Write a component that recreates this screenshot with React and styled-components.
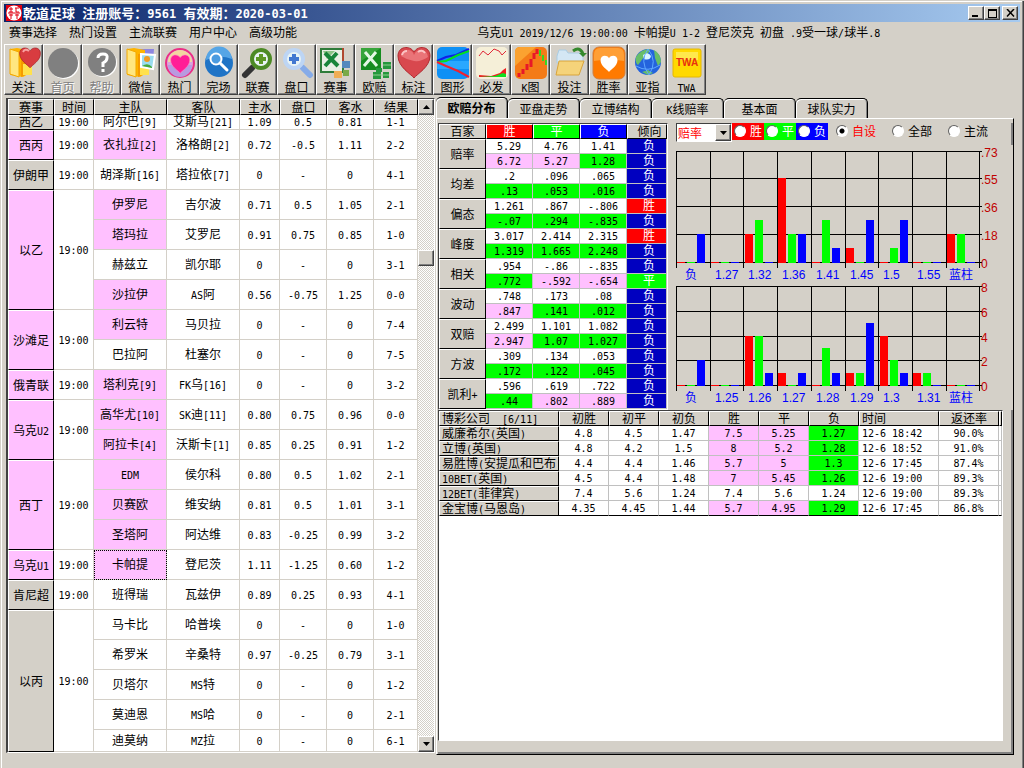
import { useState } from "react";
import styled, { createGlobalStyle, css } from "styled-components";

const face = "#d4d0c8";
const pink = "#ffc0ff";

const GlobalStyle = createGlobalStyle`
    * { box-sizing: border-box; }
    body {
        margin: 0;
        background: ${face};
    }
    body, button, select, table {
        font-family: "Noto Sans CJK SC", "Liberation Sans", sans-serif;
        font-size: 12px;
        line-height: 14px;
        color: #000;
    }
    button { padding: 0; cursor: default; }
`;

const raised = css`
    background: ${face};
    border: 1px solid;
    border-color: #fff #404040 #404040 #fff;
    box-shadow: inset -1px -1px #808080;
`;

const Latin = styled.span`
    font-family: "DejaVu Sans Mono", monospace;
    font-size: ${(p) => p.$size || 10}px;
    line-height: 0;
    white-space: pre;
`;

// half-width runs are set in the mono face, the rest in the CJK face
const Text = ({ children, size }) =>
    String(children)
        .split(/([\x20-\x7e]+)/)
        .filter(Boolean)
        .map((s, i) => (/^[\x20-\x7e]/.test(s) ? <Latin key={i} $size={size}>{s}</Latin> : s));

const Window = styled.div`
    min-height: 100vh;
    display: flex;
    flex-direction: column;
    padding: 4px 4px 13px;
    background: ${face};
    box-shadow: inset 0 1px ${face}, inset 1px 0 ${face}, inset -1px 0 #404040, inset -2px 0 #808080, inset 2px 2px #fff;
`;

const TitleBar = styled.header`
    height: 18px;
    display: flex;
    align-items: center;
    padding: 0 2px;
    background: linear-gradient(to right, #0a246a, #a6caf0);
`;

const Title = styled.h1`
    flex: 1;
    margin: 0 0 0 1px;
    color: #fff;
    font-size: 13px;
    line-height: 16px;
    font-weight: bold;
`;

const WinButton = styled.button`
    ${raised}
    width: 16px;
    height: 14px;
    display: grid;
    place-items: center;
    margin-left: ${(p) => (p.$apart ? 2 : 0)}px;
`;

const MenuBar = styled.div`
    height: 20px;
    display: flex;
    align-items: center;
`;

const Menu = styled.nav`
    flex: 0 0 46%;
    display: flex;
    gap: 12px;
    padding-left: 5px;
`;

const MenuItem = styled.button`
    border: 0;
    background: none;
`;

const MatchInfo = styled.div`
    flex: 1;
    padding-left: 6px;
    white-space: nowrap;
`;

const Toolbar = styled.div`
    display: flex;
    margin-top: 2px;
`;

const Tool = styled.button`
    ${raised}
    width: 39px;
    height: 51px;
    display: flex;
    flex-direction: column;
    align-items: center;
    justify-content: flex-start;
    padding-top: 1px;
    svg { display: block; }
    &:disabled {
        color: #808080;
        text-shadow: 1px 1px #fff;
    }
`;

const Main = styled.main`
    flex: 1;
    display: grid;
    grid-template-columns: 429fr 578fr;
    gap: 1px;
    padding: 2px 6px 0 2px;
`;

const MatchPane = styled.section`
    align-self: start;
    margin-top: 1px;
    display: flex;
    border: 2px solid;
    border-width: 1px 1px 1px 2px;
    border-color: #404040 #fff #fff #404040;
    background: #fff;
`;

const Table = styled.table`
    width: 100%;
    table-layout: fixed;
    border-collapse: separate;
    border-spacing: 0;
    tbody tr:last-child > td {
        border-bottom-color: ${(p) => (p.$closed ? "#000" : "")};
    }
`;

const HeadCell = styled.th`
    height: ${(p) => p.$height || 15}px;
    padding: 0 0 2px ${(p) => (p.$align ? 2 : p.$shift ? 5 : 0)}px;
    font-weight: normal;
    text-align: ${(p) => p.$align || "center"};
    line-height: 11px;
    white-space: nowrap;
    color: ${(p) => p.$color || "#000"};
    background: ${(p) => p.$bg || face};
    border: 1px solid;
    border-color: #fff #000 #000 #fff;
`;

const Cell = styled.td`
    height: ${(p) => p.$height || 15}px;
    padding: 0 0 2px ${(p) => (p.$align ? 3 : p.$shift ? 5 : 0)}px;
    text-align: ${(p) => p.$align || "center"};
    line-height: 12px;
    white-space: nowrap;
    color: ${(p) => p.$color || "#000"};
    background: ${(p) => p.$bg || "#fff"};
    border: 1px solid ${(p) => p.$line || face};
    border-width: 0 1px 1px 0;
    outline: ${(p) => (p.$focus ? "1px dotted #000" : "none")};
    outline-offset: -1px;
`;

const ScrollBar = styled.div`
    flex: 0 0 16px;
    display: flex;
    flex-direction: column;
    background: repeating-conic-gradient(${face} 0 25%, #fff 0 50%) 0 0 / 2px 2px;
`;

const ScrollButton = styled.button`
    ${raised}
    height: 16px;
    display: grid;
    place-items: center;
`;

const Thumb = styled.div`
    ${raised}
    height: 16px;
`;

const Spacer = styled.div`
    flex: ${(p) => p.$grow};
`;

const Analysis = styled.section`
    min-width: 0;
    display: flex;
    flex-direction: column;
`;

const Tabs = styled.div`
    display: flex;
    align-items: flex-end;
    height: 21px;
`;

const Tab = styled.button`
    width: 72px;
    height: ${(p) => (p.$active ? 21 : 20)}px;
    font-weight: ${(p) => (p.$active ? "bold" : "normal")};
    background: ${face};
    border: 1px solid #000;
    border-width: 1px 1px 0 0;
    border-radius: 5px 5px 0 0;
    box-shadow: inset 1px 1px #fff, inset -1px 0 #808080;
`;

const TabBody = styled.div`
    flex: 1;
    display: flex;
    flex-direction: column;
    padding: 4px 0 0 1px;
    border: 1px solid;
    border-color: #fff #000 #000 #fff;
`;

const Upper = styled.div`
    display: flex;
`;

const StatPane = styled.div`
    flex: 0 0 40%;
    border: 1px solid;
    border-color: #404040 #fff #fff #404040;
`;

const ChartPane = styled.div`
    flex: 1;
    min-width: 0;
    padding-left: 8px;
    svg { display: block; }
`;

const Controls = styled.form`
    height: 22px;
    display: flex;
    align-items: flex-start;
    border-right: 2px solid #808080;
`;

const Combo = styled.div`
    position: relative;
    width: 56px;
    height: 19px;
    border: 1px solid;
    border-color: #404040 #fff #fff #404040;
    background: #fff;
    select {
        width: 100%;
        height: 17px;
        padding: 0 0 0 1px;
        border: 0;
        appearance: none;
        background: #fff;
        color: #f00;
    }
`;

const ComboArrow = styled.span`
    ${raised}
    position: absolute;
    top: 0;
    right: 0;
    width: 16px;
    height: 17px;
    display: grid;
    place-items: center;
    pointer-events: none;
`;

const RadioLabel = styled.label`
    display: flex;
    align-items: center;
    gap: 4px;
    height: 17px;
    padding: 0 2px 2px;
    margin-left: ${(p) => (p.$bg ? 0 : 6)}px;
    min-width: ${(p) => (p.$bg ? 32 : 50)}px;
    white-space: nowrap;
    color: ${(p) => p.$color || "#000"};
    background: ${(p) => p.$bg || "none"};
    input {
        appearance: none;
        flex: none;
        width: 12px;
        height: 12px;
        margin: 0;
        border: 1px solid;
        border-color: #606060 #fff #fff #606060;
        border-radius: 50%;
        background: #fff;
    }
    input:checked {
        background: radial-gradient(circle, #000 2px, #fff 3px);
    }
`;

const Lower = styled.div`
    flex: 1;
    padding: 0 8px 11px 0;
    border-right: 2px solid #808080;
    border-bottom: 2px solid #808080;
    display: flex;
`;

const CompanyPane = styled.div`
    flex: 1;
    background: #fff;
    border: 1px solid;
    border-color: #404040 #fff #fff #404040;
`;

const Icon = ({ children }) => <svg width="34" height="34" viewBox="0 0 34 34" aria-hidden="true">{children}</svg>;

const Arrow = ({ up }) => (
    <svg width="7" height="4" viewBox="0 0 7 4" aria-hidden="true">
        <path d={up ? "M0 4h7L3.500 0z" : "M0 0h7L3.500 4z"} />
    </svg>
);

const HEART = "M17 32C14 28 1 21 1 10C1 0 13 -1 17 6C21 -1 33 0 33 10C33 21 20 28 17 32Z";

const Folder = () => (
    <>
        <path d="M3 3l7-1 11 2v24l-5 3-13-2z" fill="#ffb400" />
        <path d="M3 3l9 3v25l-9-3z" fill="#ffe680" stroke="#f3a800" />
        <path d="M14 8h6v20l-6 3z" fill="#f59a00" />
        <path d="M16 18h9v11h-9z" fill="#ffe14d" />
    </>
);

const Lens = ({ ring, handle, plus, flip }) => (
    <g transform={flip ? "matrix(-1 0 0 1 34 0)" : undefined}>
        <path d="M11 22l-7 7" stroke={handle} strokeWidth="6" strokeLinecap="round" />
        <circle cx="20" cy="13" r="9" fill="#e8f3f4" stroke={ring} strokeWidth="4" />
        <path d="M20 8v10M15 13h10" stroke={plus} strokeWidth="4" />
    </g>
);

const tools = [
    ["关注", <><Folder /><path transform="translate(12 1) scale(.65)" d={HEART} fill="#d83c40" stroke="#a01820" /><path d="M16 6q2-4 6-1" stroke="#f9a0a0" strokeWidth="2" fill="none" /></>],
    ["首页", <><circle cx="18" cy="18" r="15" fill="#fff" /><circle cx="17" cy="17" r="15" fill="#808080" /></>, true],
    ["帮助", <><circle cx="18" cy="17" r="14" fill="#fff" /><circle cx="17" cy="16" r="14" fill="#808080" /><path d="M13 12q0-4 5-4t4 4q0 3-4 5v4M18 23v3" fill="none" stroke="#fff" strokeWidth="3" /></>, true],
    ["微信", <><path d="M12 3h18l-1 12H12z" fill="#8d86e0" /><Folder /><path d="M17 8l14 1-2 14-12-2z" fill="#9adcf0" stroke="#fff" strokeWidth="2" /><circle cx="23" cy="13" r="3" fill="#f09a20" /><path d="M18 20q6-4 10 1v1l-10-2z" fill="#48a838" /></>],
    ["热门", <><circle cx="17" cy="17" r="14" fill="#d8a4dc" stroke="#ea2f86" strokeWidth="2" /><path d="M5 16a12 12 0 0 1 24 0z" fill="#f2d6a0" /><path d="M5 19a12 12 0 0 0 24 0z" fill="#b89ae0" /><path transform="translate(7 8) scale(.6)" d={HEART} fill="#ff1e96" stroke="#ff8cc8" /></>],
    ["完场", <><circle cx="17" cy="17" r="14" fill="#1f74c6" /><path d="M4 14a13 13 0 0 1 26-1q-13-5-26 1z" fill="#55a5e6" /><circle cx="14" cy="13" r="5.500" fill="#4b9be0" stroke="#fff" strokeWidth="2" /><path d="M18 17l7 7" stroke="#fff" strokeWidth="3" strokeLinecap="round" /></>],
    ["联赛", <Lens ring="#4c8a24" handle="#333" plus="#5d9826" />],
    ["盘口", <Lens ring="#bdd5f4" handle="#86abe8" plus="#4278d0" flip />],
    ["赛事", <><path d="M2 3h22v23H2z" fill="#e9efe5" stroke="#2f7c3a" strokeWidth="2" /><path d="M24 2v14" stroke="#b04830" strokeWidth="2" /><path d="M4 5h12l-8 8z" fill="#8cc487" /><path d="M6 7l13 13M18 7L6 20" stroke="#18853a" strokeWidth="4" /><path d="M23 15h8v7h-8z" fill="#5488bd" /><path d="M15 25h8v7h-8z" fill="#f0ad55" /><path d="M24 24h6v6h-6z" fill="#79a947" /></>],
    ["欧赔", <><path d="M3 2h20v22H3z" fill="#168c1f" /><path d="M3 2h20L3 15z" fill="#37a53b" /><path d="M7 6l12 14M18 6L6 20" stroke="#e3f7e3" strokeWidth="3" /><path d="M25 16h8v7h-8zM15 26h8v7h-8zM25 26h6v6h-6zM18 22h6v4h-6z" fill="#26983c" /><path d="M25 19h8M15 29h16" stroke="#8ed08c" /></>],
    ["标注", <><path d={HEART} fill="#d8484e" stroke="#b12c32" /><path d="M4 10q1-7 8-6 4 1 5 5 2-5 7-5 6 0 7 7-7 5-14 4T4 10z" fill="#ea7478" /><path d="M5 9q1-4 5-4M21 6q4-3 7 1" stroke="#fbc4c4" strokeWidth="2" fill="none" /></>],
    ["图形", <><rect x="1" y="1" width="32" height="32" rx="5" fill="#0e90f5" /><path d="M1 15h32v8H1z" fill="#2aa8ff" /><path d="M1 15l9-4 10-2 13-6" fill="none" stroke="#1020e8" strokeWidth="2" /><path d="M1 16l9-1 12-6 11-4" fill="none" stroke="#00e020" strokeWidth="2" /><path d="M1 16l9 4 12 5 11 6" fill="none" stroke="#f02030" strokeWidth="2" /></>],
    ["必发", <><rect x="1" y="1" width="32" height="32" rx="5" fill="#f5efd8" /><path d="M4 10l4-5 5 4 6-6 5 2 3 4 4-4" fill="none" stroke="#e02838" /><path d="M4 31v-2l12 1 9-3 3-3 3-2v9z" fill="#f02020" /><path d="M5 31l15-1 8-3 3 1v3z" fill="#10e020" /></>],
    ["K图", <><rect x="1" y="1" width="32" height="32" rx="5" fill="#f47b17" /><path d="M6 1h16L1 20V6q0-5 5-5z" fill="#fba230" /><path d="M5 27v4M9 23v5M13 18v6M17 13v8M20 7v6M23 3v5" stroke="#e81828" strokeWidth="3" /><path d="M26 4v6M29 9v6M32 14v5" stroke="#38d820" strokeWidth="2" /></>],
    ["投注", <><path d="M4 10l2-6h7l2 3h15v10H4z" fill="#d4e7f4" stroke="#aacde4" /><path d="M6 15h25l-5 14H3z" fill="#f5d37a" stroke="#d9a43a" /><path d="M20 5q7-5 10 3" fill="none" stroke="#34892c" strokeWidth="3" /><path d="M26 7h8l-4 4z" fill="#34892c" /></>],
    ["胜率", <><rect x="1" y="1" width="32" height="32" rx="6" fill="#ff7a00" stroke="#d08040" /><path d="M2 9q0-7 6-7h18q6 0 6 7v6q-15-3-30 0z" fill="#ff9f35" /><path transform="translate(8 9) scale(.53)" d={HEART} fill="#fff" /></>],
    ["亚指", <><circle cx="17" cy="16" r="13" fill="#2463dd" /><path d="M5 11q5-8 14-8-1 5-6 8l-6 8q-3-2-2-8zM23 4q7 4 7 12l-3 4-3-8zM11 26l6-2 5 3-5 2z" fill="#68be68" /><path d="M12 9q5-4 8 1-1 5-7 3z" fill="#d8f4ff" /><path d="M5 20q12 7 24-1M17 3q-9 12 1 26M17 3q10 12 1 26" fill="none" stroke="#5fa8ff" /></>],
    ["TWA", <><rect x="3" y="3" width="28" height="28" rx="2" fill="#ffd900" stroke="#e6b800" /><rect x="6" y="6" width="22" height="8" fill="#ffe94d" /><text x="17" y="20" textAnchor="middle" fontFamily="Liberation Sans, sans-serif" fontWeight="bold" fontSize="10" fill="#e83010">TWA</text></>],
];

// [league, highlighted, [home, away, home odds, line, away odds, score, highlighted, row height]]
const groups = [
    ["西乙", 0, [["阿尔巴[9]", "艾斯马[21]", "1.09", "0.5", "0.81", "1-1", 0, 15]]],
    ["西丙", 1, [["衣扎拉[2]", "洛格朗[2]", "0.72", "-0.5", "1.11", "2-2", 1]]],
    ["伊朗甲", 0, [["胡泽斯[16]", "塔拉依[7]", "0", "-", "0", "4-1", 0]]],
    ["以乙", 1, [
        ["伊罗尼", "吉尔波", "0.71", "0.5", "1.05", "2-1", 1],
        ["塔玛拉", "艾罗尼", "0.91", "0.75", "0.85", "1-0", 1],
        ["赫兹立", "凯尔耶", "0", "-", "0", "3-1", 0],
        ["沙拉伊", "AS阿", "0.56", "-0.75", "1.25", "0-0", 1],
    ]],
    ["沙滩足", 1, [
        ["利云特", "马贝拉", "0", "-", "0", "7-4", 1],
        ["巴拉阿", "杜塞尔", "0", "-", "0", "7-5", 0],
    ]],
    ["俄青联", 1, [["塔利克[9]", "FK乌[16]", "0", "-", "0", "3-2", 1]]],
    ["乌克U2", 1, [
        ["高华尤[10]", "SK迪[11]", "0.80", "0.75", "0.96", "0-0", 1],
        ["阿拉卡[4]", "沃斯卡[1]", "0.85", "0.25", "0.91", "1-2", 1],
    ]],
    ["西丁", 1, [
        ["EDM", "侯尔科", "0.80", "0.5", "1.02", "2-1", 1],
        ["贝赛欧", "维安纳", "0.81", "0.5", "1.01", "3-1", 1],
        ["圣塔阿", "阿达维", "0.83", "-0.25", "0.99", "3-2", 1],
    ]],
    ["乌克U1", 1, [["卡帕提", "登尼茨", "1.11", "-1.25", "0.60", "1-2", 1]]],
    ["肯尼超", 0, [["班得瑞", "瓦兹伊", "0.89", "0.25", "0.93", "4-1", 0]]],
    ["以丙", 0, [
        ["马卡比", "哈普埃", "0", "-", "0", "1-0", 0],
        ["希罗米", "辛桑特", "0.97", "-0.25", "0.79", "3-1", 0],
        ["贝塔尔", "MS特", "0", "-", "0", "1-2", 0],
        ["莫迪恩", "MS哈", "0", "-", "0", "2-1", 0],
        ["迪莫纳", "MZ拉", "0", "-", "0", "6-1", 0, 22],
    ]],
];

// w white, p pink, g green: cell fills of the second line
const stats = [
    ["赔率", ["5.29", "4.76", "1.41", "负"], ["6.72", "5.27", "1.28", "负"], "ppg"],
    ["均差", [".2", ".096", ".065", "负"], [".13", ".053", ".016", "负"], "ggg"],
    ["偏态", ["1.261", ".867", "-.806", "胜"], ["-.07", ".294", "-.835", "负"], "ggg"],
    ["峰度", ["3.017", "2.414", "2.315", "胜"], ["1.319", "1.665", "2.248", "负"], "ggg"],
    ["相关", [".954", "-.86", "-.835", "负"], [".772", "-.592", "-.654", "平"], "gpp"],
    ["波动", [".748", ".173", ".08", "负"], [".847", ".141", ".012", "负"], "pgg"],
    ["双赔", ["2.499", "1.101", "1.082", "负"], ["2.947", "1.07", "1.027", "负"], "pgg"],
    ["方波", [".309", ".134", ".053", "负"], [".172", ".122", ".045", "负"], "ggg"],
    ["凯利+", [".596", ".619", ".722", "负"], [".44", ".802", ".889", "负"], "gpp"],
];

const companies = [
    ["威廉希尔(英国)", "4.8", "4.5", "1.47", "7.5", "5.25", "1.27", "12-6 18:42", "90.0%", 1],
    ["立博(英国)", "4.8", "4.2", "1.5", "8", "5.2", "1.28", "12-6 18:52", "91.0%", 1],
    ["易胜博(安提瓜和巴布", "4.4", "4.4", "1.46", "5.7", "5", "1.3", "12-6 17:45", "87.4%", 1],
    ["10BET(英国)", "4.5", "4.4", "1.48", "7", "5.45", "1.26", "12-6 19:00", "89.3%", 1],
    ["12BET(菲律宾)", "7.4", "5.6", "1.24", "7.4", "5.6", "1.24", "12-6 19:00", "89.3%", 0],
    ["金宝博(马恩岛)", "4.35", "4.45", "1.44", "5.7", "4.95", "1.29", "12-6 17:45", "86.8%", 1],
];

const fills = { w: "#fff", p: pink, g: "#00ff00" };
const trend = { 胜: "#ff0000", 平: "#00ff00", 负: "#0000c0" };
const barColors = ["#ff0000", "#00ff00", "#0000ff"];

const Cols = ({ widths }) => <colgroup>{widths.map((w, i) => <col key={i} width={w} />)}</colgroup>;

const MatchTable = () => (
    <Table>
        <Cols widths={[46, 40, 73, 73, 40, 47, 47, 44]} />
        <thead>
            <tr>
                {["赛事", "时间", "主队", "客队", "主水", "盘口", "客水", "结果"].map((h) => <HeadCell key={h} $height={16}>{h}</HeadCell>)}
            </tr>
        </thead>
        <tbody>
            {groups.map(([league, hot, rows]) =>
                rows.map((r, i) => (
                    <tr key={r[0]}>
                        {i === 0 && <HeadCell scope="rowgroup" rowSpan={rows.length} $height={r[7] || 30} $bg={hot ? pink : face}><Text>{league}</Text></HeadCell>}
                        {i === 0 && <Cell rowSpan={rows.length} $height={r[7] || 30}><Text>19:00</Text></Cell>}
                        {r.slice(0, 6).map((v, j) => (
                            <Cell key={j} $height={r[7] || 30} $bg={j === 0 && r[6] ? pink : undefined} $focus={v === "卡帕提"}><Text>{v}</Text></Cell>
                        ))}
                    </tr>
                ))
            )}
        </tbody>
    </Table>
);

const StatTable = () => (
    <Table>
        <Cols widths={[47, 47, 47, 47, 40]} />
        <thead>
            <tr>
                <HeadCell>百家</HeadCell>
                {["胜", "平", "负"].map((h, i) => <HeadCell key={h} $color="#fff" $bg={barColors[i]}>{h}</HeadCell>)}
                <HeadCell $shift>倾向</HeadCell>
            </tr>
        </thead>
        <tbody>
            {stats.map(([name, a, b, c]) =>
                [a, b].map((line, i) => (
                    <tr key={name + i}>
                        {i === 0 && <HeadCell scope="rowgroup" rowSpan={2}><Text>{name}</Text></HeadCell>}
                        {line.map((v, j) => (
                            <Cell key={j} $line="#c0c0c0" $shift={j === 3} $color={j === 3 ? "#fff" : undefined} $bg={j === 3 ? trend[v] : fills[i ? c[j] : "w"]}><Text>{v}</Text></Cell>
                        ))}
                    </tr>
                ))
            )}
        </tbody>
    </Table>
);

const CompanyTable = () => (
    <Table $closed>
        <Cols widths={[120, 50, 50, 50, 50, 50, 50, 80, 60, 3]} />
        <thead>
            <tr>
                <HeadCell $align="left"><Text>博彩公司  [6/11]</Text></HeadCell>
                {["初胜", "初平", "初负", "胜", "平", "负"].map((h) => <HeadCell key={h}>{h}</HeadCell>)}
                <HeadCell $align="left">时间</HeadCell>
                <HeadCell>返还率</HeadCell>
                <HeadCell aria-hidden="true" />
            </tr>
        </thead>
        <tbody>
            {companies.map((c) => (
                <tr key={c[0]}>
                    <HeadCell scope="row" $align="left"><Text>{c[0]}</Text></HeadCell>
                    {c.slice(1, 9).map((v, j) => (
                        <Cell key={j} $line="#c0c0c0" $align={j === 6 ? "left" : undefined} $bg={c[9] && j > 2 && j < 6 ? (j === 5 ? fills.g : pink) : undefined}><Text>{v}</Text></Cell>
                    ))}
                    <Cell $line="#c0c0c0" />
                </tr>
            ))}
        </tbody>
    </Table>
);

const gridX = [0, 34, 67, 101, 135, 169, 202, 236, 270, 303];

const BarChart = ({ title, lines, scale, labels, bars, height }) => {
    const base = lines[lines.length - 1];
    return (
        <svg width="330" height={height} role="img" aria-label={title} shapeRendering="crispEdges" fontFamily="'Liberation Sans', 'Noto Sans CJK SC', sans-serif" fontSize="12">
            <g fill="#000">
                {gridX.map((x) => <rect key={x} x={x} y={lines[0]} width="1" height={base - lines[0] + 6} />)}
                {lines.map((y) => <rect key={y} x="0" y={y} width="306" height="1" />)}
            </g>
            {bars.map((g, i) => g.map((h, j) => (
                <rect key={`${i}-${j}`} x={gridX[i] + 1 + j * 10 + (i === 2 || i === 6 ? 1 : 0)} y={base - h} width="8" height={h + 1} fill={barColors[j]} />
            )))}
            <g fill="#0000ff">
                {labels.map((l, i) => <text key={l} x={gridX[i] + (i === 0 ? 9 : i === 8 ? 3 : 5)} y={base + 17}>{l}</text>)}
            </g>
            <g fill="#c00000">
                {scale.map((s, i) => <text key={s} x="305" y={lines[i] + 6}>{s}</text>)}
            </g>
        </svg>
    );
};

const App = () => {
    const [tab, setTab] = useState("欧赔分布");
    const [scope, setScope] = useState("自设");
    return (
        <>
            <GlobalStyle />
            <Window>
                <TitleBar>
                    <svg width="16" height="16" viewBox="0 0 16 16" aria-hidden="true">
                        <rect width="16" height="16" fill="#e00010" />
                        <circle cx="8" cy="8" r="7.500" fill="#fff" />
                        <path d="M3 4h4M5 2v5M3 7h4M9 3h4M10 3v4h3M3 10h4M5 9v5M9 10h4M11 9v5M2 8h12" stroke="#e00010" fill="none" />
                    </svg>
                    <Title><Text size={12}>乾道足球 注册账号：9561 有效期：2020-03-01</Text></Title>
                    <WinButton aria-label="最小化"><svg width="8" height="8"><path d="M0 6h6v2H0z" /></svg></WinButton>
                    <WinButton aria-label="最大化"><svg width="9" height="9"><path d="M0 1h9M.5 0v9M8.500 0v9M0 8.500h9" stroke="#000" /><path d="M0 0h9v2H0z" /></svg></WinButton>
                    <WinButton $apart aria-label="关闭"><svg width="9" height="8"><path d="M1 0l7 7.500M8 0L1 7.500" stroke="#000" strokeWidth="1.500" /></svg></WinButton>
                </TitleBar>
                <MenuBar>
                    <Menu>
                        {["赛事选择", "热门设置", "主流联赛", "用户中心", "高级功能"].map((m) => <MenuItem key={m}>{m}</MenuItem>)}
                    </Menu>
                    <MatchInfo><Text>乌克U1 2019/12/6 19:00:00 卡帕提U 1-2 登尼茨克 初盘 .9受一球/球半.8</Text></MatchInfo>
                </MenuBar>
                <Toolbar>
                    {tools.map(([name, art, off]) => (
                        <Tool key={name} disabled={off}><Icon>{art}</Icon><span><Text>{name}</Text></span></Tool>
                    ))}
                </Toolbar>
                <Main>
                    <MatchPane>
                        <MatchTable />
                        <ScrollBar>
                            <ScrollButton aria-label="向上"><Arrow up /></ScrollButton>
                            <Spacer $grow={135} />
                            <Thumb />
                            <Spacer $grow={470} />
                            <ScrollButton aria-label="向下"><Arrow /></ScrollButton>
                        </ScrollBar>
                    </MatchPane>
                    <Analysis>
                        <Tabs role="tablist">
                            {["欧赔分布", "亚盘走势", "立博结构", "K线赔率", "基本面", "球队实力"].map((t) => (
                                <Tab key={t} role="tab" aria-selected={t === tab} $active={t === tab} onClick={() => setTab(t)}><Text>{t}</Text></Tab>
                            ))}
                        </Tabs>
                        <TabBody>
                            <Upper>
                                <StatPane><StatTable /></StatPane>
                                <ChartPane>
                                    <Controls>
                                        <Combo>
                                            <select aria-label="指标" defaultValue="赔率">
                                                <option>赔率</option>
                                                <option>均差</option>
                                            </select>
                                            <ComboArrow><Arrow /></ComboArrow>
                                        </Combo>
                                        {["胜", "平", "负"].map((s, i) => (
                                            <RadioLabel key={s} $color="#fff" $bg={barColors[i]}><input type="radio" name="side" />{s}</RadioLabel>
                                        ))}
                                        {["自设", "全部", "主流"].map((s) => (
                                            <RadioLabel key={s} $color={s === "自设" ? "#f00" : undefined}>
                                                <input type="radio" name="scope" checked={scope === s} onChange={() => setScope(s)} />{s}
                                            </RadioLabel>
                                        ))}
                                    </Controls>
                                    <BarChart
                                        title="初盘分布"
                                        height={138}
                                        lines={[6, 33, 61, 89, 117]}
                                        scale={[".73", ".55", ".36", ".18", "0"]}
                                        labels={["负", "1.27", "1.32", "1.36", "1.41", "1.45", "1.5", "1.55", "蓝柱"]}
                                        bars={[[0, 0, 28], [0, 0, 0], [28, 42, 0], [84, 28, 28], [0, 42, 14], [14, 0, 42], [0, 14, 42], [0, 0, 0], [28, 28, 0]]}
                                    />
                                    <BarChart
                                        title="即时分布"
                                        height={126}
                                        lines={[3, 28, 53, 77, 102]}
                                        scale={["8", "6", "4", "2", "0"]}
                                        labels={["负", "1.25", "1.26", "1.27", "1.28", "1.29", "1.3", "1.31", "蓝柱"]}
                                        bars={[[0, 0, 25], [0, 0, 0], [49, 49, 12], [12, 0, 12], [0, 37, 12], [12, 12, 62], [49, 25, 12], [12, 12, 0], [0, 0, 0]]}
                                    />
                                </ChartPane>
                            </Upper>
                            <Lower>
                                <CompanyPane><CompanyTable /></CompanyPane>
                            </Lower>
                        </TabBody>
                    </Analysis>
                </Main>
            </Window>
        </>
    );
};

export default App;
